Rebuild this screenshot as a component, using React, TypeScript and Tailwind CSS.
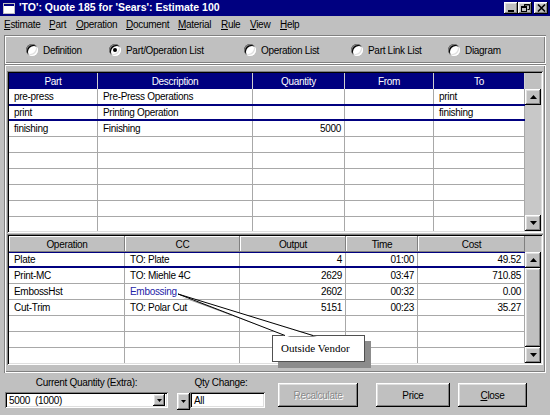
import React from "react";

const RAISED =
  "shadow-[inset_-1px_-1px_#000,inset_1px_1px_#fff,inset_-2px_-2px_#808080,inset_2px_2px_#dfdfdf]";
const SOFT_RAISED = "shadow-[inset_-1px_-1px_#808080,inset_1px_1px_#fff]";
const SUNKEN =
  "shadow-[inset_1px_1px_#808080,inset_-1px_-1px_#fff,inset_2px_2px_#000,inset_-2px_-2px_#dfdfdf]";
const ETCHED =
  "shadow-[inset_1px_1px_#808080,inset_-1px_-1px_#fff,inset_2px_2px_#fff,inset_-2px_-2px_#808080]";

const menu = [
  { u: "E", rest: "stimate", w: "w-[45px]" },
  { u: "P", rest: "art", w: "w-[27px]" },
  { u: "O", rest: "peration", w: "w-[50px]" },
  { u: "D", rest: "ocument", w: "w-[52px]" },
  { u: "M", rest: "aterial", w: "w-[43px]" },
  { u: "R", rest: "ule", w: "w-[29px]" },
  { u: "V", rest: "iew", w: "w-[30px]" },
  { u: "H", rest: "elp", w: "w-[30px]" },
];

const radios = [
  { label: "Definition", w: "w-[83px]" },
  { label: "Part/Operation List", w: "w-[135px]", checked: true },
  { label: "Operation List", w: "w-[107px]" },
  { label: "Part Link List", w: "w-[97px]" },
  { label: "Diagram", w: "w-[80px]" },
];

interface Col {
  title: string;
  w: string;
  right?: boolean;
}

const partCols: Col[] = [
  { title: "Part", w: "w-[89px]" },
  { title: "Description", w: "w-[155px]" },
  { title: "Quantity", w: "w-[92px]", right: true },
  { title: "From", w: "w-[89px]" },
  { title: "To", w: "w-[91px]" },
];

const partRows = [
  ["pre-press", "Pre-Press Operations", "", "", "print"],
  ["print", "Printing Operation", "", "", "finishing"],
  ["finishing", "Finishing", "5000", "", ""],
  ["", "", "", "", ""],
  ["", "", "", "", ""],
  ["", "", "", "", ""],
  ["", "", "", "", ""],
  ["", "", "", "", ""],
  ["", "", "", "", ""],
];

const opCols: Col[] = [
  { title: "Operation", w: "w-[116px]" },
  { title: "CC", w: "w-[115px]" },
  { title: "Output", w: "w-[106px]", right: true },
  { title: "Time", w: "w-[72px]", right: true },
  { title: "Cost", w: "w-[107px]", right: true },
];

const opRows = [
  ["Plate", "TO: Plate", "4", "01:00", "49.52"],
  ["Print-MC", "TO: Miehle 4C", "2629", "03:47", "710.85"],
  ["EmbossHst", "Embossing", "2602", "00:32", "0.00"],
  ["Cut-Trim", "TO: Polar Cut", "5151", "00:23", "35.27"],
  ["", "", "", "", ""],
  ["", "", "", "", ""],
  ["", "", "", "", ""],
];

function Arrow({ up }: { up?: boolean }) {
  return (
    <svg width="7" height="4" viewBox="0 0 7 4">
      <path d={up ? "M3.5 0 L7 4 L0 4 Z" : "M0 0 L7 0 L3.5 4 Z"} fill="#000" />
    </svg>
  );
}

function ArrowBtn({ up }: { up?: boolean }) {
  return (
    <div className={`w-[16px] h-[16px] shrink-0 bg-[#c0c0c0] flex items-center justify-center ${RAISED}`}>
      <Arrow up={up} />
    </div>
  );
}

function ScrollBar({ thumb }: { thumb?: boolean }) {
  return (
    <div className="flex-1 flex flex-col">
      <ArrowBtn up />
      <div className="flex-1 bg-[#c8c8c8]">
        {thumb && <div className={`h-full bg-[#c0c0c0] ${RAISED}`} />}
      </div>
      <ArrowBtn />
    </div>
  );
}

function Grid({
  cols,
  rows,
  navyHead,
  selected,
  thumb,
  height,
}: {
  cols: Col[];
  rows: string[][];
  navyHead?: boolean;
  selected: number;
  thumb?: boolean;
  height: string;
}) {
  return (
    <div className={`${height} p-[2px] flex bg-[#c0c0c0] ${SUNKEN}`}>
      <div className="w-[516px] flex flex-col">
        <div className="h-[16px] flex shrink-0">
          {cols.map((c) =>
            navyHead ? (
              <div
                key={c.title}
                className={`${c.w} h-full flex items-center justify-center bg-[#000080] text-white border-r border-[#d0d0d0]`}
              >
                {c.title}
              </div>
            ) : (
              <div
                key={c.title}
                className={`${c.w} h-full flex items-center justify-center bg-[#c0c0c0] ${SOFT_RAISED}`}
              >
                {c.title}
              </div>
            )
          )}
        </div>
        <div className="flex-1 bg-white overflow-hidden">
          {rows.map((r, i) => (
            <div key={i} className="relative h-[16px] flex border-b border-[#a8a8a8]">
              {r.map((v, j) => (
                <div
                  key={j}
                  className={`${cols[j].w} h-full flex items-center overflow-hidden whitespace-nowrap border-r border-[#a8a8a8] ${
                    cols[j].right ? "justify-end pr-[3px]" : "pl-[5px]"
                  } ${v === "Embossing" ? "text-[#2424a8]" : ""}`}
                >
                  {v}
                </div>
              ))}
              {i === selected && (
                <div className="absolute inset-x-0 -top-[1px] -bottom-[1px] border-y-2 border-[#000080] pointer-events-none" />
              )}
            </div>
          ))}
        </div>
      </div>
      <div className="w-[16px] flex flex-col">
        <div className="h-[16px] shrink-0" />
        <ScrollBar thumb={thumb} />
      </div>
    </div>
  );
}

function WinBtn({ kind }: { kind: "min" | "max" | "close" }) {
  return (
    <div className={`w-[14px] h-[12px] bg-[#c0c0c0] flex items-center justify-center ${RAISED}`}>
      <svg width="9" height="8" viewBox="0 0 9 8">
        {kind === "min" && <rect x="1" y="6" width="6" height="2" fill="#000" />}
        {kind === "max" && (
          <g fill="none" stroke="#000" strokeWidth="1">
            <path d="M3.5 2.5 V0.5 H8.5 V5.5 H6.5" />
            <path d="M3 1 H9" strokeWidth="1" />
            <rect x="0.5" y="2.5" width="5" height="5" />
            <path d="M0 3.5 H6" />
          </g>
        )}
        {kind === "close" && (
          <g stroke="#000" strokeWidth="1.6">
            <path d="M1 0.5 L8 7.5 M8 0.5 L1 7.5" />
          </g>
        )}
      </svg>
    </div>
  );
}

function Button({ children, w, disabled }: { children: React.ReactNode; w: string; disabled?: boolean }) {
  return (
    <div
      className={`${w} h-[24px] mt-[10px] bg-[#c0c0c0] flex items-center justify-center ${RAISED} ${
        disabled ? "text-[#8a8a8a] [text-shadow:1px_1px_0_#fff]" : ""
      }`}
    >
      {children}
    </div>
  );
}

export default function App() {
  return (
    <div className="relative w-[550px] h-[415px] overflow-hidden bg-[#c0c0c0] text-black text-[10px] tracking-[-0.3px] font-['Liberation_Sans',Arial,sans-serif]">
      {/* title bar */}
      <div className="h-[16px] bg-[#000080] flex items-center pl-[3px] pr-[2px]">
        <svg width="12" height="11" viewBox="0 0 12 11">
          <rect x="0" y="0" width="12" height="11" fill="#c0c0c0" />
          <rect x="1" y="1" width="10" height="9" fill="#fff" />
          <rect x="1" y="1" width="10" height="2" fill="#000080" />
        </svg>
        <span className="ml-[4px] text-white font-bold text-[10.5px] tracking-normal">
          {"'TO': Quote 185 for 'Sears': Estimate 100"}
        </span>
        <div className="ml-auto flex items-center">
          <WinBtn kind="min" />
          <WinBtn kind="max" />
          <div className="ml-[2px]">
            <WinBtn kind="close" />
          </div>
        </div>
      </div>

      {/* menu */}
      <div className="h-[16px] flex items-center pl-[4px]">
        {menu.map((m) => (
          <div key={m.u + m.rest} className={m.w}>
            <span className="underline underline-offset-[1px]">{m.u}</span>
            {m.rest}
          </div>
        ))}
      </div>

      {/* view radios */}
      <div className={`mx-[4px] mt-[3px] h-[29px] flex items-center pl-[22px] pt-[1px] ${ETCHED}`}>
        {radios.map((r) => (
          <div key={r.label} className={`${r.w} flex items-center`}>
            <div className={`w-[12px] h-[12px] rounded-full bg-white flex items-center justify-center ${SUNKEN}`}>
              {r.checked && <div className="w-[4px] h-[4px] rounded-full bg-black" />}
            </div>
            <span className="ml-[5px]">{r.label}</span>
          </div>
        ))}
      </div>

      {/* tables */}
      <div className={`mx-[4px] h-[309px] pt-[7px] px-[3px] ${ETCHED}`}>
        <Grid cols={partCols} rows={partRows} navyHead selected={1} height="h-[162px]" />
        <div className="mt-[1px]">
          <Grid cols={opCols} rows={opRows} selected={0} thumb height="h-[131px]" />
        </div>
      </div>

      {/* bottom controls */}
      <div className="flex px-[5px]">
        <div className="w-[163px]">
          <div className="h-[14px] mt-[3px] leading-[14px] text-center">Current Quantity (Extra):</div>
          <div className={`mt-[2px] h-[16px] bg-white flex items-center pl-[4px] pr-[3px] ${SUNKEN}`}>
            <span className="whitespace-pre">{"5000  (1000)"}</span>
            <div className={`ml-auto w-[12px] h-[12px] bg-[#c0c0c0] flex items-center justify-center ${RAISED}`}>
              <svg width="5" height="3" viewBox="0 0 5 3">
                <path d="M0 0 H5 L2.5 3 Z" fill="#000" />
              </svg>
            </div>
          </div>
        </div>
        <div className="ml-[9px] w-[88px]">
          <div className="h-[14px] mt-[3px] leading-[14px] text-center">Qty Change:</div>
          <div className="mt-[2px] flex items-start">
            <div className={`w-[13px] h-[17px] mt-[1px] bg-[#c0c0c0] flex items-center justify-center ${RAISED}`}>
              <svg width="5" height="3" viewBox="0 0 5 3">
                <path d="M0 0 H5 L2.5 3 Z" fill="#000" />
              </svg>
            </div>
            <div className={`w-[75px] h-[16px] bg-white flex items-center pl-[4px] ${SUNKEN}`}>All</div>
          </div>
        </div>
        <div className="ml-[13px]">
          <Button w="w-[80px]" disabled>
            Recalculate
          </Button>
        </div>
        <div className="ml-[18px]">
          <Button w="w-[74px]">Price</Button>
        </div>
        <div className="ml-[8px]">
          <Button w="w-[69px]">
            <span>
              <span className="underline underline-offset-[1px]">C</span>lose
            </span>
          </Button>
        </div>
      </div>

      {/* callout */}
      <div className="absolute left-[272px] top-[335px] w-[93px] h-[27px] bg-white border border-[#505050] shadow-[6px_6px_0_#8c8c8c] flex items-center pl-[8px] text-[11px] tracking-normal font-['Liberation_Serif','Times_New_Roman',serif]">
        Outside Vendor
      </div>
      <svg className="absolute left-0 top-0 pointer-events-none" width="550" height="415" viewBox="0 0 550 415">
        <polygon points="181,297 317,337 290,337" fill="#8c8c8c" />
        <polygon points="178,294 313,336 285,336" fill="#fff" />
        <path d="M178 294 L313 335.5 M178 294 L285 335.5" stroke="#000" strokeWidth="1" fill="none" />
      </svg>
    </div>
  );
}
